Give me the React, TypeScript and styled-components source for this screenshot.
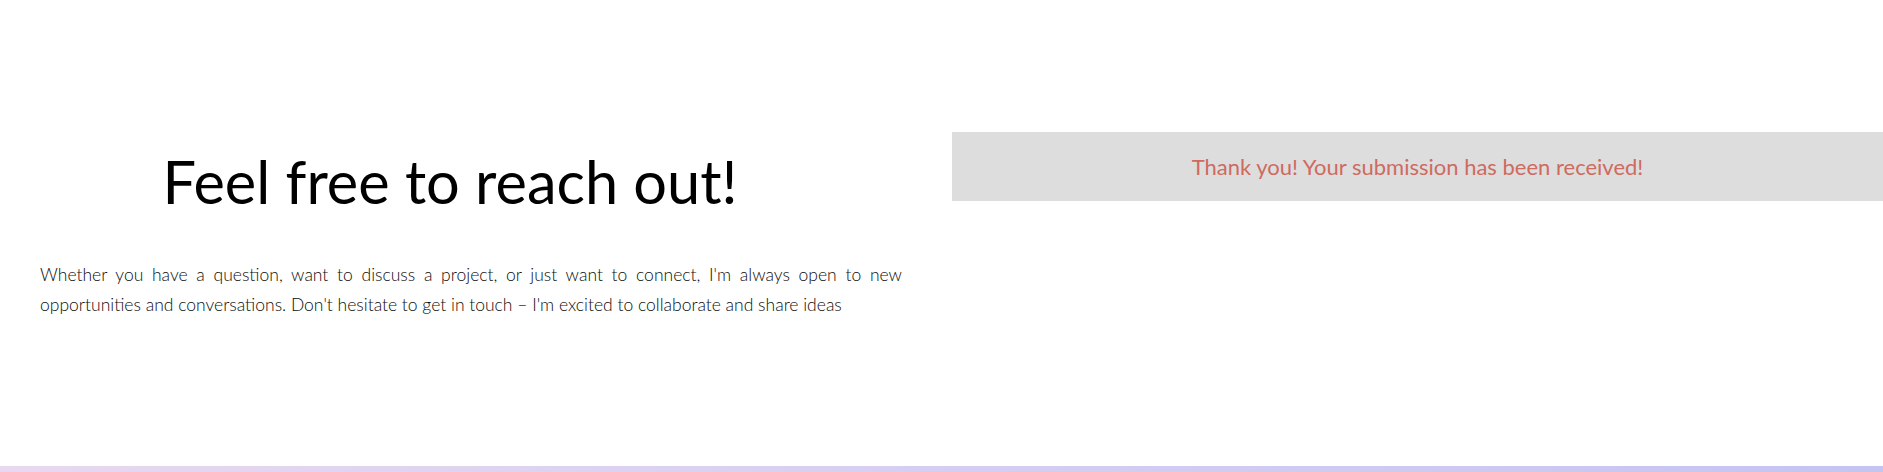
import React from "react";
import styled, { createGlobalStyle } from "styled-components";

const Global = createGlobalStyle`
  html, body { margin: 0; padding: 0; background: #fff; }
  body { font-family: Lato, "Open Sans", Arial, sans-serif; }
  * { box-sizing: border-box; }
`;

const Page = styled.div`
  width: 100%;
  height: 472px;
  display: flex;
  flex-direction: column;
`;

const Section = styled.section`
  flex: 1;
  display: grid;
  grid-template-columns: 942px 1fr;
  align-items: start;
  padding-top: 132px;
`;

const LeftCol = styled.div`
  padding: 0 40px;
  display: flex;
  flex-direction: column;
`;

const Heading = styled.h2`
  margin: 13px 0 0;
  padding-right: 42px;
  font-family: Lato, sans-serif;
  font-weight: 400;
  font-size: 59.5px;
  line-height: 72px;
  color: #000;
  text-align: center;
`;

const Paragraph = styled.p`
  margin: 43px 0 0;
  font-family: Lato, sans-serif;
  font-weight: 300;
  font-size: 17.5px;
  line-height: 29.5px;
  color: #0d0d0d;
  text-align: justify;
`;

const RightCol = styled.div`
  padding-left: 10px;
`;

const Done = styled.div`
  background: #dddddd;
  padding: 20px;
  text-align: center;
  font-family: Lato, sans-serif;
  font-size: 22px;
  line-height: 29px;
  color: #cf6a5f;
`;

const Bar = styled.div`
  height: 6px;
  background: linear-gradient(90deg, #e8d8f0 0%, #c4c4f2 100%);
`;

export default function App() {
  return (
    <>
      <Global />
      <Page>
        <Section>
          <LeftCol>
            <Heading>Feel free to reach out!</Heading>
            <Paragraph>
              Whether you have a question, want to discuss a project, or just want to connect, I'm always open to new
              opportunities and conversations. Don't hesitate to get in touch – I'm excited to collaborate and share ideas
            </Paragraph>
          </LeftCol>
          <RightCol>
            <Done>Thank you! Your submission has been received!</Done>
          </RightCol>
        </Section>
        <Bar />
      </Page>
    </>
  );
}
